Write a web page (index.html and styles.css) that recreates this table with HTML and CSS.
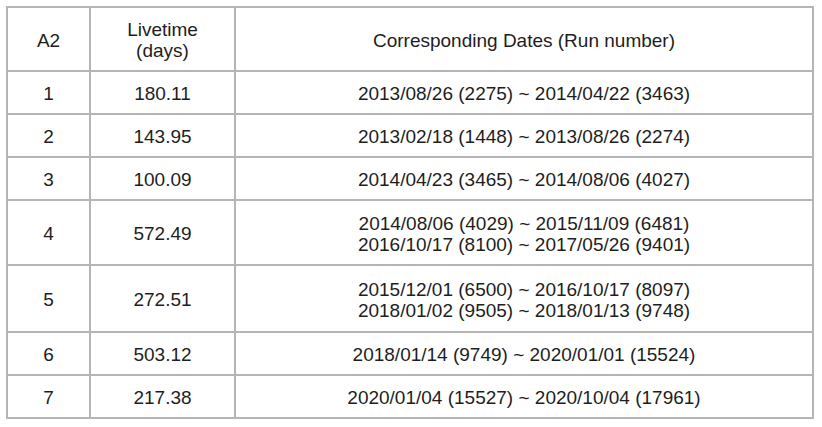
FILE: index.html
```html
<!DOCTYPE html>
<html>
<head>
<meta charset="utf-8">
<link rel="stylesheet" href="styles.css">
</head>
<body>
<table class="runs">
  <colgroup>
    <col class="c-a2">
    <col class="c-live">
    <col class="c-dates">
  </colgroup>
  <thead>
    <tr class="r-head">
      <th>A2</th>
      <th>Livetime<br>(days)</th>
      <th>Corresponding Dates (Run number)</th>
    </tr>
  </thead>
  <tbody>
    <tr class="r-one">
      <td>1</td><td>180.11</td><td>2013/08/26 (2275) ~ 2014/04/22 (3463)</td>
    </tr>
    <tr class="r-one">
      <td>2</td><td>143.95</td><td>2013/02/18 (1448) ~ 2013/08/26 (2274)</td>
    </tr>
    <tr class="r-one">
      <td>3</td><td>100.09</td><td>2014/04/23 (3465) ~ 2014/08/06 (4027)</td>
    </tr>
    <tr class="r-two">
      <td>4</td><td>572.49</td><td>2014/08/06 (4029) ~ 2015/11/09 (6481)<br>2016/10/17 (8100) ~ 2017/05/26 (9401)</td>
    </tr>
    <tr class="r-two-b">
      <td>5</td><td>272.51</td><td>2015/12/01 (6500) ~ 2016/10/17 (8097)<br>2018/01/02 (9505) ~ 2018/01/13 (9748)</td>
    </tr>
    <tr class="r-one">
      <td>6</td><td>503.12</td><td>2018/01/14 (9749) ~ 2020/01/01 (15524)</td>
    </tr>
    <tr class="r-one">
      <td>7</td><td>217.38</td><td>2020/01/04 (15527) ~ 2020/10/04 (17961)</td>
    </tr>
  </tbody>
</table>
</body>
</html>
```

FILE: styles.css
```css
html, body {
  background: #ffffff;
}
body {
  margin: 6px;
  font-family: "Liberation Sans", Arial, sans-serif;
  color: #1e1e1e;
}
.runs {
  border-collapse: collapse;
  table-layout: fixed;
  width: 806px;
  font-size: 19px;
  line-height: 21px;
}
.c-a2 { width: 83px; }
.c-live { width: 145px; }
.c-dates { width: 578px; }
.runs th,
.runs td {
  border: 2px solid #b5b5b5;
  text-align: center;
  vertical-align: middle;
  font-weight: normal;
  padding: 2px 4px 0 4px;
}
.r-head { height: 64px; }
.r-one { height: 43px; }
.r-two { height: 65px; }
.r-two-b { height: 67px; }
```
